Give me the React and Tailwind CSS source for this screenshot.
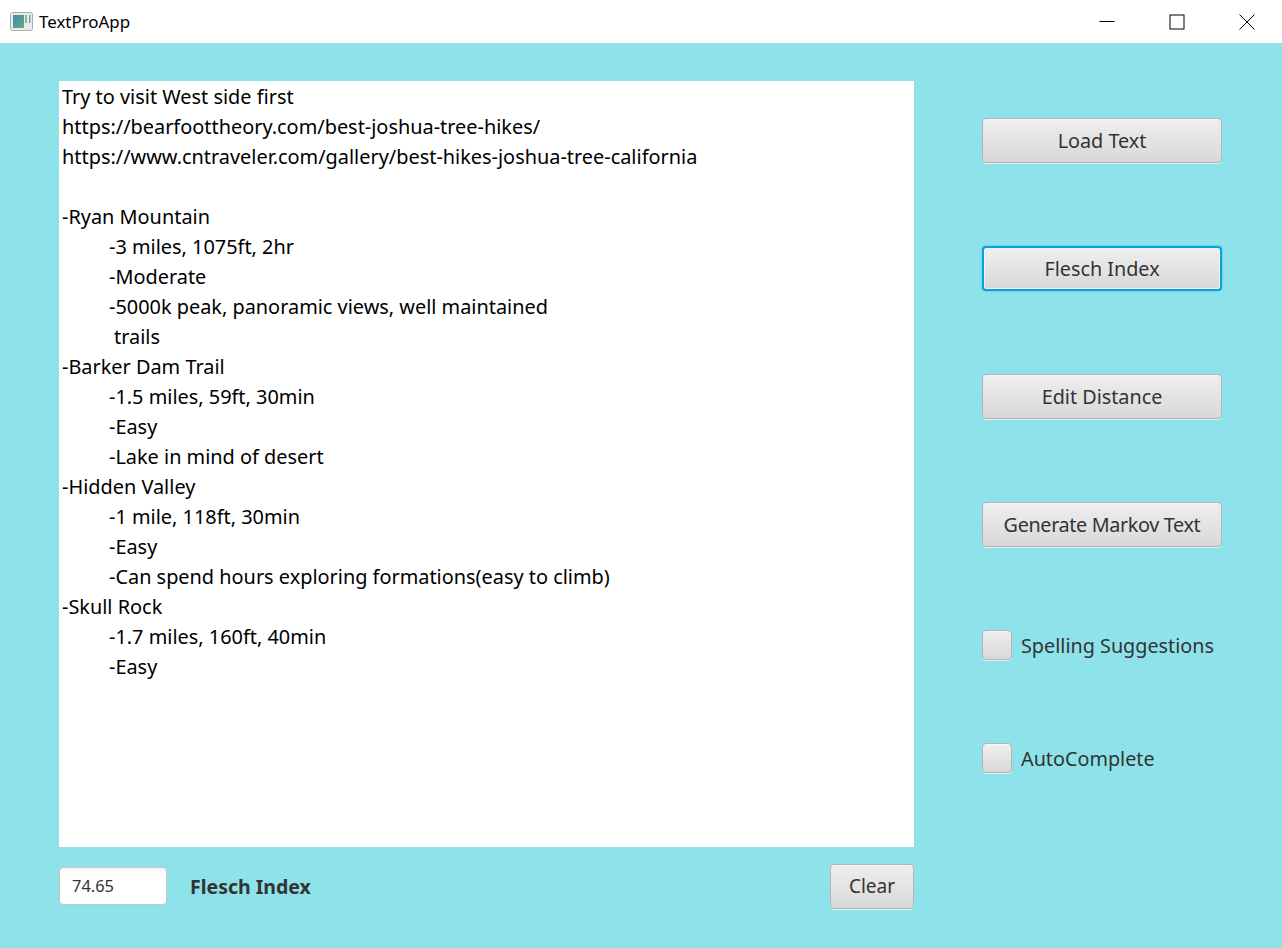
const lines = [
  ["Try to visit West side first", 0],
  ["https://bearfoottheory.com/best-joshua-tree-hikes/", 0],
  ["https://www.cntraveler.com/gallery/best-hikes-joshua-tree-california", 0],
  ["\u00a0", 0],
  ["-Ryan Mountain", 0],
  ["-3 miles, 1075ft, 2hr", 1],
  ["-Moderate", 1],
  ["-5000k peak, panoramic views, well maintained", 1],
  ["trails", 2],
  ["-Barker Dam Trail", 0],
  ["-1.5 miles, 59ft, 30min", 1],
  ["-Easy", 1],
  ["-Lake in mind of desert", 1],
  ["-Hidden Valley", 0],
  ["-1 mile, 118ft, 30min", 1],
  ["-Easy", 1],
  ["-Can spend hours exploring formations(easy to climb)", 1],
  ["-Skull Rock", 0],
  ["-1.7 miles, 160ft, 40min", 1],
  ["-Easy", 1],
];

function Btn({ label, focused, className = "" }) {
  return (
    <button
      className={
        "h-[45px] rounded-[4px] bg-gradient-to-b from-[#efefef] to-[#d8d8d8] text-[#333333] " +
        (focused
          ? "border-2 border-[#0f9fd8] shadow-[0_0_2px_#3bb4e0,inset_0_0_0_1px_#f0f4f6] "
          : "border border-[#b5b5b5] shadow-[0_1px_0_#d8f5f8,inset_0_1px_0_#f6f6f6] ") +
        className
      }
    >
      {label}
    </button>
  );
}

function Check({ label }) {
  return (
    <div className="flex items-center gap-[9px] h-[30px]">
      <div className="w-[30px] h-[30px] rounded-[4px] border border-[#b5b5b5] bg-gradient-to-b from-[#efefef] to-[#d8d8d8] shadow-[0_1px_0_#d8f5f8,inset_0_1px_0_#f6f6f6]" />
      <span className="text-[19.8px] text-[#333333] mt-[1px]">{label}</span>
    </div>
  );
}

export default function App() {
  return (
    <div className="w-[1282px] h-[948px] flex flex-col bg-[#8ee2ea] overflow-hidden font-['Noto_Sans','Open_Sans',sans-serif]">
      <header className="h-[43px] bg-white flex items-center shrink-0">
        <svg className="ml-[10px]" width="23" height="19" viewBox="0 0 23 19">
          <defs>
            <linearGradient id="ic" x1="0" y1="0" x2="1" y2="1">
              <stop offset="0" stopColor="#4a86b8" />
              <stop offset="1" stopColor="#5fae7c" />
            </linearGradient>
          </defs>
          <rect x="0.5" y="0.5" width="22" height="18" rx="2" fill="#e9ecec" stroke="#a9adb0" />
          <rect x="3" y="3" width="11" height="13" fill="url(#ic)" />
          <rect x="15" y="3" width="2" height="8" fill="#8fb79f" />
          <rect x="19" y="3" width="1.5" height="8" fill="#6f9fa8" />
        </svg>
        <span className="ml-[6px] text-[16.9px] text-black">TextProApp</span>
        <div className="ml-auto flex items-center">
          <svg width="16" height="16" viewBox="0 0 16 16" className="mr-[54px] -mt-[1px]">
            <path d="M0.5 8.5H15.5" stroke="#000" strokeWidth="1" />
          </svg>
          <svg width="16" height="16" viewBox="0 0 16 16" className="mr-[54px]">
            <rect x="1" y="1" width="14" height="14" fill="none" stroke="#000" strokeWidth="1" />
          </svg>
          <svg width="16" height="16" viewBox="0 0 16 16" className="mr-[27px]">
            <path d="M0.5 0.5L15.5 15.5M15.5 0.5L0.5 15.5" stroke="#000" strokeWidth="1" />
          </svg>
        </div>
      </header>

      <main className="flex flex-1">
        <section className="ml-[59px] mt-[38px] w-[855px] flex flex-col">
          <div className="h-[766px] bg-white pl-[3px] pt-[1px] text-[19.9px] leading-[30px] text-black">
            {lines.map(([t, indent], i) => (
              <div
                key={i}
                className={
                  "whitespace-pre " + (indent === 1 ? "pl-[47px]" : indent === 2 ? "pl-[52px]" : "")
                }
              >
                {t}
              </div>
            ))}
          </div>
          <div className="mt-[17px] flex items-center">
            <div className="w-[108px] h-[38px] -mt-[1px] bg-gradient-to-b from-[#f4f4f4] to-white to-[15%] rounded-[4px] border border-[#c4c4c4] flex items-center pl-[12px] text-[16.4px] text-[#333333]">
              74.65
            </div>
            <span className="ml-[23px] text-[19.5px] font-bold text-[#333333]">Flesch Index</span>
            <Btn label="Clear" className="ml-auto w-[84px] text-[19px]" />
          </div>
        </section>

        <aside className="ml-[68px] mt-[75px] w-[240px] flex flex-col">
          <Btn label="Load Text" className="w-full text-[19.8px]" />
          <Btn label="Flesch Index" focused className="w-full mt-[83px] text-[19.8px]" />
          <Btn label="Edit Distance" className="w-full mt-[83px] text-[19.8px]" />
          <Btn label="Generate Markov Text" className="w-full mt-[83px] text-[19.8px] tracking-[-0.35px]" />
          <div className="mt-[83px]">
            <Check label="Spelling Suggestions" />
          </div>
          <div className="mt-[83px]">
            <Check label="AutoComplete" />
          </div>
        </aside>
      </main>
    </div>
  );
}
